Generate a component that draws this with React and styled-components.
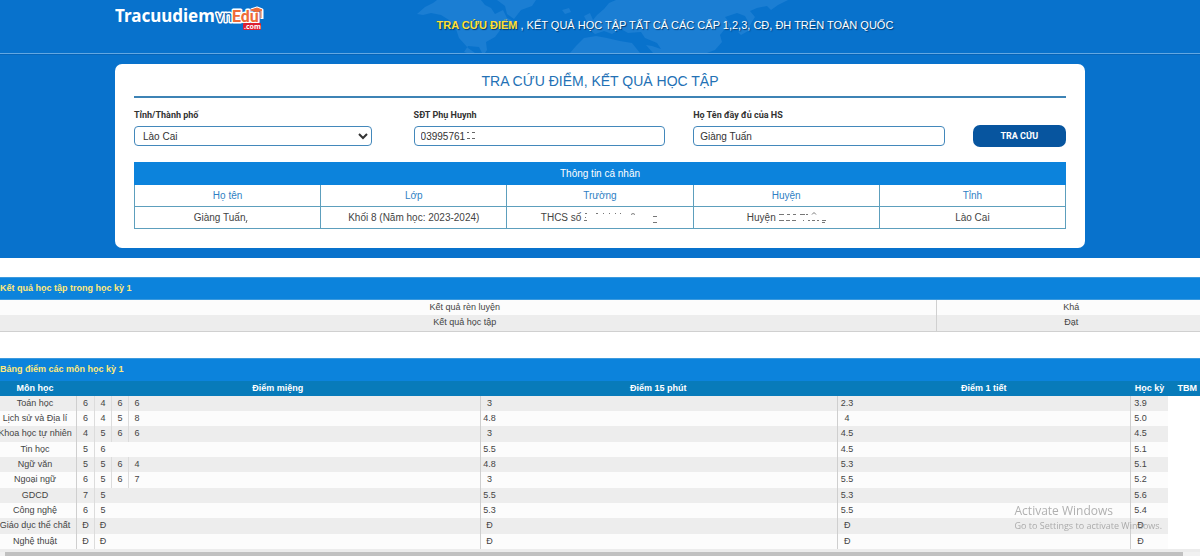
import React, { useState } from 'react'
import styled, { createGlobalStyle } from 'styled-components'

const GlobalStyle = createGlobalStyle`
  * {
    box-sizing: border-box;
  }

  body {
    margin: 0;
    overflow: hidden;
    background: #fff;
    color: #444;
    font: 9px/1.7 'Liberation Sans', Arial, sans-serif;
  }
`

const Hero = styled.div`
  background: #0872cc;
  padding-bottom: 10px;
`

const Header = styled.header`
  position: relative;
  height: 54px;
  border-bottom: 1px solid #63a8e2;
  box-shadow: 0 1px 0 #0664b8;
`

const Container = styled.div`
  max-width: 970px;
  margin: 0 auto;
`

const HeaderContent = styled(Container)`
  position: relative;
  display: flex;
`

const LogoLink = styled.a`
  padding-top: 4px;

  svg {
    display: block;
  }
`

const Slogan = styled.p`
  flex: 1;
  margin: 0;
  padding: 15px 20px 0 0;
  color: #fff;
  font-size: 11px;
  line-height: 20px;
  text-align: center;
  white-space: nowrap;
  text-shadow: 1px 1px 1px #033a6b;

  strong {
    color: #ffe034;
  }
`

const MapDrawing = styled.svg`
  position: absolute;
  top: 0;
  left: 50%;
  margin-left: -187px;
  fill: #1b7ed3;
`

const Card = styled(Container)`
  margin-top: 10px;
  padding: 0 19px 19px;
  background: #fff;
  border-radius: 7px;
`

const Title = styled.h1`
  margin: 0 0 10px;
  padding: 6px 0 4px;
  border-bottom: 2px solid #3d83b5;
  color: #2371b5;
  font-size: 14px;
  font-weight: 400;
  line-height: 22px;
  text-align: center;
`

const Form = styled.form`
  display: grid;
  grid-template-columns: 30% 30% 30% 10%;
  align-items: end;
  margin-bottom: 15px;
`

const Field = styled.div`
  position: relative;
  height: 39px;

  label {
    display: block;
    margin-bottom: 4px;
    color: #333;
    font: 700 9px/14px Roboto, sans-serif;
  }

  input,
  select {
    display: block;
    height: 20px;
    border: 1px solid #4388bb;
    border-radius: 4px;
    background: #fff;
    color: #333;
    font: 10px 'Liberation Sans', Arial, sans-serif;
  }

  input {
    width: 90%;
    padding: 0 6px;
  }

  select {
    width: 85%;
    padding: 0 4px;
  }
`

const SubmitButton = styled.button`
  height: 22px;
  padding: 0;
  border: 0;
  border-radius: 7px;
  background: #07559f;
  color: #fff;
  font: 700 9px Roboto, sans-serif;
`

const PhoneMarks = styled.svg`
  position: absolute;
  left: 52px;
  top: 24px;
`

const Marks = styled.svg`
  vertical-align: -3px;
`

const InfoTable = styled.table`
  width: 100%;
  table-layout: fixed;
  border-collapse: collapse;
  font-size: 10px;
  line-height: 21px;
  text-align: center;

  th,
  td {
    height: 22px;
    padding: 0;
    border: 1px solid #5d9fbd;
    font-weight: 400;
  }

  th {
    color: #2f7fc4;
  }

  thead tr:first-child th {
    border-color: #0c83dc;
    background: #0c83dc;
    color: #fff;
  }
`

const SectionTitle = styled.h2`
  margin: ${props => props.$gap}px 0 0;
  border-top: 1px solid #3c9ade;
  border-bottom: 1px solid ${props => (props.$flush ? '#0c83dc' : '#3c9ade')};
  background: #0c83dc;
  color: #ffe97a;
  font-size: 9px;
  line-height: 21px;
`

const Scroller = styled.div`
  overflow: hidden;
`

const WideTable = styled.table`
  width: calc(100% + 12px);
  margin-left: -6px;
  table-layout: fixed;
  text-align: center;
`

const ResultTable = styled(WideTable)`
  border-collapse: collapse;
  border-bottom: 1px solid #d0d0d0;

  tr {
    background: #fcfcfc;
  }

  tr:nth-child(even) {
    background: #ededed;
  }

  td {
    padding: 0;
  }

  td + td {
    width: 270px;
    border-left: 1px solid #d0d0d0;
  }
`

const ScoreTable = styled(WideTable)`
  border-collapse: separate;
  border-spacing: 0;
  white-space: nowrap;

  th,
  td {
    padding: 0;
  }

  thead {
    background: #087bba;
    color: #fff;
  }

  tbody th {
    font-weight: 400;
  }

  tbody td {
    border-left: 1px solid #cfcfcf;
  }

  tbody th,
  tbody td {
    background: #fcfcfc;
  }

  tbody tr:nth-child(odd) th,
  tbody tr:nth-child(odd) td {
    background: #ededed;
  }
`

const Col = styled.col`
  width: ${props => props.$width};
`

const Scores = styled.div`
  display: flex;
`

const Score = styled.span`
  width: 17px;

  &:only-child {
    width: 18px;
  }

  & + & {
    border-left: 1px solid #dcdcdc;
  }
`

const Scrollbar = styled.div`
  padding: 0 17px 0 5px;
  border-top: 3px solid #ececec;
  background: #f1f1f1;

  &::before {
    content: '';
    display: block;
    height: 4px;
    background: #c1c1c1;
  }
`

const Watermark = styled.aside`
  position: fixed;
  right: 38px;
  bottom: 23px;
  color: rgba(135, 135, 135, 0.65);
  font: 9px/14px 'Open Sans', sans-serif;
  pointer-events: none;

  strong {
    display: block;
    font-size: 12px;
    font-weight: 400;
    line-height: 16px;
  }
`

const subjects = [
  { name: 'Toán học', oral: '6 4 6 6', quiz: '3', test: '2.3', term: '3.9' },
  { name: 'Lịch sử và Địa lí', oral: '6 4 5 8', quiz: '4.8', test: '4', term: '5.0' },
  { name: 'Khoa học tự nhiên', oral: '4 5 6 6', quiz: '3', test: '4.5', term: '4.5' },
  { name: 'Tin học', oral: '5 6', quiz: '5.5', test: '4.5', term: '5.1' },
  { name: 'Ngữ văn', oral: '5 5 6 4', quiz: '4.8', test: '5.3', term: '5.1' },
  { name: 'Ngoại ngữ', oral: '6 5 6 7', quiz: '3', test: '5.5', term: '5.2' },
  { name: 'GDCD', oral: '7 5', quiz: '5.5', test: '5.3', term: '5.6' },
  { name: 'Công nghệ', oral: '6 5', quiz: '5.3', test: '5.5', term: '5.4' },
  { name: 'Giáo dục thể chất', oral: 'Đ Đ', quiz: 'Đ', test: 'Đ', term: 'Đ' },
  { name: 'Nghệ thuật', oral: 'Đ Đ', quiz: 'Đ', test: 'Đ', term: 'Đ' },
]

const WorldMap = () => (
  <MapDrawing width="380" height="53" viewBox="0 0 380 53" aria-hidden="true">
    <path d="M4 14 12 7 20 3 24 0H68L72 5 78 8 82 14 90 10 94 18 103 22 96 28 88 29 82 37 73 42 74 50 72 53H69L66 47 55 46 51 52 54 53H62L55 48 46 38 43 29 36 20 28 15 18 13 10 15Z" />
    <path d="M84 0H123L119 6 108 10 101 19 94 14 92 6Z" />
    <path d="M174 22 171 16 177 13 180 20 184 15 191 9 196 3 203 0H375L365 5 358 10 354 6 344 8 337 11 342 17 337 25 332 16 324 13 312 17 318 25 311 30 307 35 309 42 302 50 294 53H240L233 45 239 46 248 49 244 43 232 38 228 32 215 33 208 29 199 34 191 31 182 34 177 30 184 26 179 24Z" />
    <path d="M157 53 163 46 171 38 183 36 194 38 207 41 219 43 227 53Z" />
    <path d="M149 10 156 8 158 12 152 14ZM325 32 332 28 335 22 338 23 335 31 328 35Z" />
  </MapDrawing>
)

const Logo = () => (
  <svg width="150" height="28" viewBox="0 0 150 28" role="img" aria-label="Tracuudiem vnEdu.com">
    <text x="0" y="18" fill="#fff" fontFamily="'Noto Sans', sans-serif" fontSize="17" fontWeight="700">Tracuudiem</text>
    <path d="M136 6 142 4 147 6V15" fill="none" stroke="#fff" strokeWidth="3" strokeLinejoin="round" />
    <g stroke="#fff" strokeWidth="3" strokeLinejoin="round" paintOrder="stroke" fontFamily="Roboto, sans-serif" fontSize="16">
      <text x="101" y="18" fill="#1769b5">vn</text>
      <text x="117" y="18" fill="#ee6b37" fontWeight="700">Edu</text>
    </g>
    <path d="M136 6 142 4 147 6 142 8ZM146 6V14" fill="#ee6b37" stroke="#ee6b37" />
    <rect x="128" y="19" width="18" height="7" rx="1" fill="#dc2032" />
    <text x="129" y="25" fill="#fff" fontFamily="'Noto Sans', sans-serif" fontSize="7" fontWeight="700">.com</text>
  </svg>
)

const renderScores = scores => (
  <Scores>
    {scores.split(' ').map((score, i) => (
      <Score key={i}>{score}</Score>
    ))}
  </Scores>
)

const App = () => {
  const [phone, setPhone] = useState('03995761')
  const [name, setName] = useState('Giàng Tuấn')

  return (
    <>
      <GlobalStyle />
      <Hero>
        <Header>
          <WorldMap />
          <HeaderContent>
            <LogoLink href="/">
              <Logo />
            </LogoLink>
            <Slogan>
              <strong>TRA CỨU ĐIỂM</strong> , KẾT QUẢ HỌC TẬP TẤT CẢ CÁC CẤP 1,2,3, CĐ, ĐH TRÊN TOÀN QUỐC
            </Slogan>
          </HeaderContent>
        </Header>
        <Card>
          <Title>TRA CỨU ĐIỂM, KẾT QUẢ HỌC TẬP</Title>
          <Form onSubmit={e => e.preventDefault()}>
            <Field>
              <label htmlFor="province">Tỉnh/Thành phố</label>
              <select id="province">
                <option>Lào Cai</option>
              </select>
            </Field>
            <Field>
              <label htmlFor="phone">SĐT Phụ Huynh</label>
              <input id="phone" value={phone} onChange={e => setPhone(e.target.value)} />
              <PhoneMarks width="12" height="8" viewBox="0 0 12 8" stroke="#666" aria-hidden="true">
                <path d="M1 .5H3M6 .5H9M1 6.5H4M6 6.5H9" />
              </PhoneMarks>
            </Field>
            <Field>
              <label htmlFor="student">Họ Tên đầy đủ của HS</label>
              <input id="student" value={name} onChange={e => setName(e.target.value)} />
            </Field>
            <SubmitButton type="submit">TRA CỨU</SubmitButton>
          </Form>
          <InfoTable>
            <thead>
              <tr>
                <th colSpan="5">Thông tin cá nhân</th>
              </tr>
              <tr>
                <th>Họ tên</th>
                <th>Lớp</th>
                <th>Trường</th>
                <th>Huyện</th>
                <th>Tỉnh</th>
              </tr>
            </thead>
            <tbody>
              <tr>
                <td>
                  Giàng Tuấn
                  <Marks width="16" height="10" stroke="#666" aria-hidden="true">
                    <path d="M2 6 1 9" />
                  </Marks>
                </td>
                <td>Khối 8 (Năm học: 2023-2024)</td>
                <td>
                  THCS số{' '}
                  <Marks width="75" height="12" fill="none" stroke="#777" aria-hidden="true">
                    <path d="M1 1.5H3M1 5.5H2M0 8.5H3M12 1.5H14M19 1.5H20M25 1.5H26M31 1.5H32M36 1.5H37M47 2.5 49 1.5 51 2.5M69 4.5H73M69 10.5H73" />
                  </Marks>
                </td>
                <td>
                  Huyện{' '}
                  <Marks width="47" height="12" fill="none" stroke="#777" aria-hidden="true">
                    <path d="M0 2.5H5M0 8.5H5M8 2.5H11M7 8.5H11M14 2.5H17M13 8.5H17M21 2.5H26M27 2.5H29M33 2.5 35 .5 37 2.5M24 8.5H25M29 8.5H31M33 8.5H36M38 8.5H40M43 8.5H47M43 10.5H46" />
                  </Marks>
                </td>
                <td>Lào Cai</td>
              </tr>
            </tbody>
          </InfoTable>
        </Card>
      </Hero>

      <SectionTitle $gap={19}>Kết quả học tập trong học kỳ 1</SectionTitle>
      <Scroller>
        <ResultTable>
          <tbody>
            <tr>
              <td>Kết quả rèn luyện</td>
              <td>Khá</td>
            </tr>
            <tr>
              <td>Kết quả học tập</td>
              <td>Đạt</td>
            </tr>
          </tbody>
        </ResultTable>
      </Scroller>

      <SectionTitle $gap={26} $flush>Bảng điểm các môn học kỳ 1</SectionTitle>
      <Scroller>
        <ScoreTable>
          <colgroup>
            <Col $width="82px" />
            <Col $width="33.3%" />
            <Col $width="29.5%" />
            <Col $width="24.2%" />
            <Col $width="38px" />
            <Col />
          </colgroup>
          <thead>
            <tr>
              <th>Môn học</th>
              <th>Điểm miệng</th>
              <th>Điểm 15 phút</th>
              <th>Điểm 1 tiết</th>
              <th>Học kỳ</th>
              <th>TBM</th>
            </tr>
          </thead>
          <tbody>
            {subjects.map(subject => (
              <tr key={subject.name}>
                <th scope="row">{subject.name}</th>
                <td>{renderScores(subject.oral)}</td>
                <td>{renderScores(subject.quiz)}</td>
                <td>{renderScores(subject.test)}</td>
                <td>{renderScores(subject.term)}</td>
              </tr>
            ))}
          </tbody>
        </ScoreTable>
      </Scroller>
      <Scrollbar />
      <Watermark>
        <strong>Activate Windows</strong>
        Go to Settings to activate Windows.
      </Watermark>
    </>
  )
}

export default App
